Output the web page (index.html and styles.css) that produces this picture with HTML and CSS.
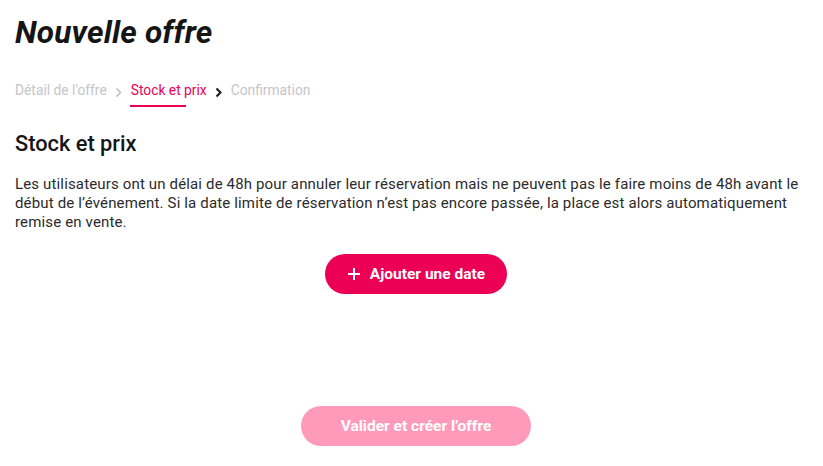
FILE: index.html
```html
<!DOCTYPE html>
<html lang="fr">
<head>
<meta charset="utf-8">
<link rel="stylesheet" href="styles.css">
</head>
<body>
<main class="page">
  <h1 class="title">Nouvelle offre</h1>
  <nav class="steps">
    <span class="step done">Détail de l'offre</span>
    <svg class="chev grey" width="8" height="11" viewBox="0 0 8 11"><path d="M1.5 1.5 L5.5 5.5 L1.5 9.5" fill="none" stroke="currentColor" stroke-width="1.5"/></svg>
    <span class="step active">Stock et prix</span>
    <svg class="chev dark" width="8" height="11" viewBox="0 0 8 11"><path d="M1.5 1.5 L5.5 5.5 L1.5 9.5" fill="none" stroke="currentColor" stroke-width="2"/></svg>
    <span class="step todo">Confirmation</span>
  </nav>
  <h2 class="section-title">Stock et prix</h2>
  <p class="info">Les utilisateurs ont un délai de 48h pour annuler leur réservation mais ne peuvent pas le faire moins de 48h avant le début de l’événement. Si la date limite de réservation n’est pas encore passée, la place est alors automatiquement remise en vente.</p>
  <div class="center">
    <button class="btn primary"><svg width="14" height="14" viewBox="0 0 14 14"><path d="M7 1 V13 M1 7 H13" stroke="#fff" stroke-width="2" fill="none"/></svg><span>Ajouter une date</span></button>
  </div>
  <div class="center footer">
    <button class="btn disabled">Valider et créer l’offre</button>
  </div>
</main>
</body>
</html>
```

FILE: styles.css
```css
* { box-sizing: border-box; }
body { margin: 0; background: #fff; font-family: Roboto, "Liberation Sans", sans-serif; color: #161617; }
.page { padding: 0 6px 0 15px; width: 823px; }
.title { margin: 0; padding-top: 15px; font-size: 31.5px; font-weight: 700; font-style: italic; line-height: 36px; letter-spacing: 0.2px; color: #151515; }
.steps { display: flex; align-items: center; margin-top: 30px; font-size: 13.8px; line-height: 18px; }
.step { display: inline-block; }
.done, .todo { color: #c5c5ca; }
.active { color: #eb0055; position: relative; }
.active::after { content: ""; position: absolute; left: -1px; width: 56px; bottom: -8px; height: 2px; background: #eb0055; }
.chev { margin: 5px 8px 0 8px; }
.chev.grey { color: #bdbdc2; }
.chev.dark { color: #151515; }
.section-title { margin: 33px 0 0; font-size: 21.8px; font-weight: 500; line-height: 24px; }
.info { margin: 19px 0 0; font-size: 15px; line-height: 19px; color: #2b2b2d; letter-spacing: 0.15px; }
.center { display: flex; justify-content: center; }
.btn { border: none; border-radius: 20px; height: 40px; font-family: inherit; font-weight: 700; font-size: 15.5px; color: #fff; display: flex; align-items: center; justify-content: center; }
.primary { margin-top: 22px; width: 182px; background: #eb0055; gap: 9px; }
.disabled { margin-top: 112px; width: 230px; background: #ff9abb; }
```
